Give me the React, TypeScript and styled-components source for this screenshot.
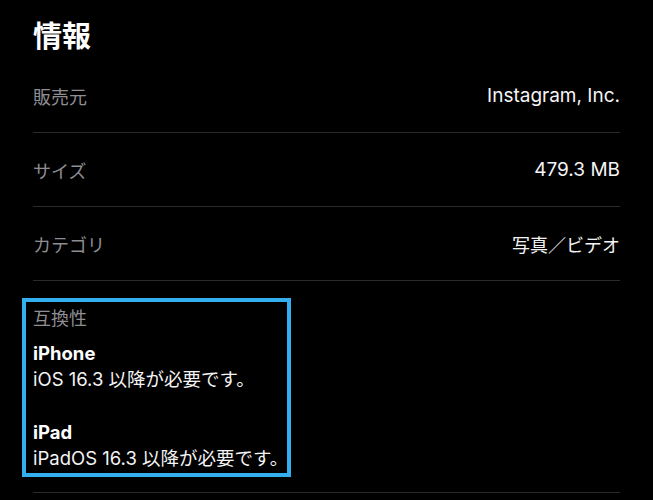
import styled, { createGlobalStyle } from "styled-components";

const GlobalStyle = createGlobalStyle`
  html, body {
    margin: 0;
    padding: 0;
    background: #000;
  }
  body {
    font-family: Inter, "Noto Sans CJK JP", sans-serif;
    -webkit-font-smoothing: antialiased;
  }
`;

const Page = styled.div`
  width: 653px;
  height: 500px;
  box-sizing: border-box;
  padding: 19px 33px 0 33px;
  background: #000;
  color: #fff;
  overflow: hidden;
`;

const Title = styled.h1`
  margin: 0 0 4px 0;
  font-size: 29px;
  line-height: 36px;
  font-weight: 700;
  color: #fff;
`;

const Row = styled.div`
  display: flex;
  align-items: center;
  justify-content: space-between;
  height: 73px;
  border-bottom: 1px solid #2a2a2c;
  font-size: 18px;
`;

const Label = styled.span`
  color: #8e8e93;
`;

const Value = styled.span<{ $size: number }>`
  color: #f4f4f4;
  font-size: ${(p) => p.$size}px;
`;

const Section = styled.div`
  padding: 17px 0 15px 0;
  border-bottom: 1px solid #2a2a2c;
`;

const Highlight = styled.div`
  width: 269px;
  margin-left: -11px;
  box-sizing: border-box;
  border: 4px solid #33aeee;
  padding: 4px 0 2px 7px;
  font-size: 18.5px;
  line-height: 26px;
  white-space: nowrap;
`;

const SectionLabel = styled.div`
  color: #8e8e93;
  font-size: 18px;
  margin-bottom: 8px;
`;

const Device = styled.div<{ $gap?: number }>`
  margin-top: ${(p) => p.$gap ?? 0}px;
`;

const DeviceName = styled.div`
  font-weight: 700;
  color: #fff;
`;

const Requirement = styled.div`
  color: #f4f4f4;
`;

const rows = [
  { label: "販売元", value: "Instagram, Inc.", size: 19 },
  { label: "サイズ", value: "479.3 MB", size: 19 },
  { label: "カテゴリ", value: "写真／ビデオ", size: 18 },
];

export default function App() {
  return (
    <>
      <GlobalStyle />
      <Page>
        <Title>情報</Title>
        {rows.map((r) => (
          <Row key={r.label}>
            <Label>{r.label}</Label>
            <Value $size={r.size}>{r.value}</Value>
          </Row>
        ))}
        <Section>
          <Highlight>
            <SectionLabel>互換性</SectionLabel>
            <Device>
              <DeviceName>iPhone</DeviceName>
              <Requirement>iOS 16.3 以降が必要です。</Requirement>
            </Device>
            <Device $gap={27}>
              <DeviceName>iPad</DeviceName>
              <Requirement>iPadOS 16.3 以降が必要です。</Requirement>
            </Device>
          </Highlight>
        </Section>
      </Page>
    </>
  );
}
